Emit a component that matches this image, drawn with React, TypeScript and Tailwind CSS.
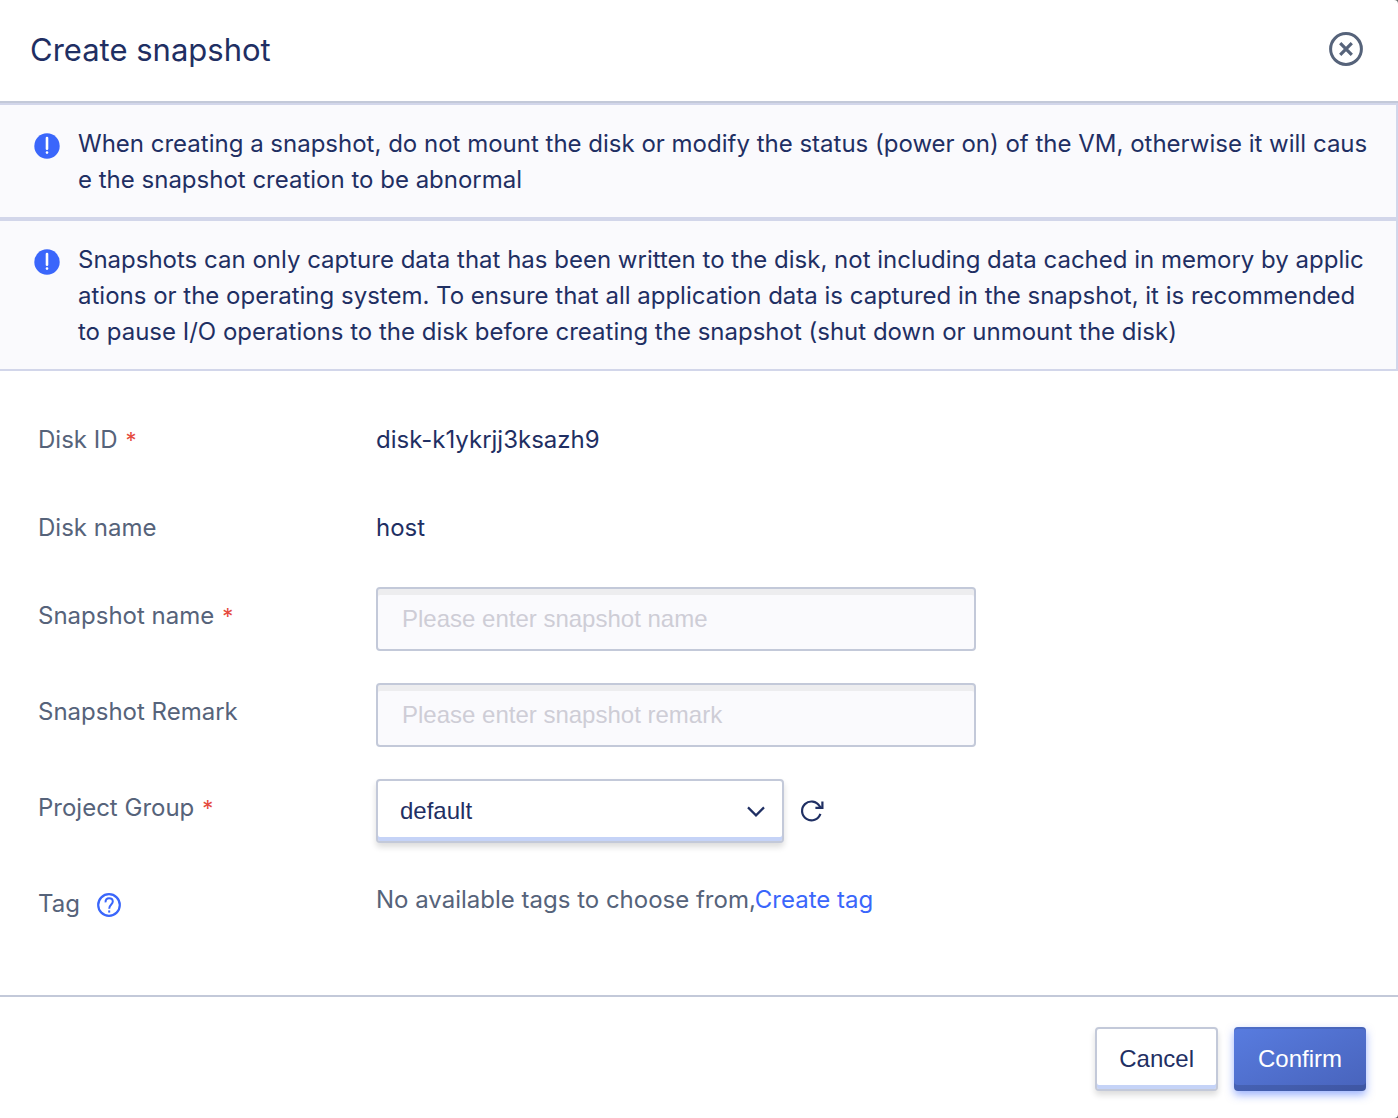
import type { ReactNode } from "react";

function AlertIcon() {
  return (
    <svg viewBox="0 0 26 26" className="mt-[7px] size-[26px] shrink-0" aria-hidden="true">
      <circle cx="13" cy="13" r="12.7" fill="#3a66fb" />
      <path d="M13 5V15.8" stroke="#fff" strokeWidth="2.6" strokeLinecap="round" />
      <circle cx="13" cy="19.6" r="1.3" fill="#fff" />
    </svg>
  );
}

function Notice({ children }: { children: ReactNode }) {
  return (
    <div className="flex gap-[18px] border-2 border-l-0 border-[#d2d6ea] bg-[#fafafd] pt-[21px] pr-7 pb-[19px] pl-[34px]">
      <AlertIcon />
      <p className="min-w-0 flex-1 break-all">{children}</p>
    </div>
  );
}

type RowProps = {
  label: string;
  htmlFor?: string;
  required?: boolean;
  hint?: ReactNode;
  children: ReactNode;
};

function Row({ label, htmlFor, required, hint, children }: RowProps) {
  return (
    <div className="flex min-h-14 items-start">
      <div className="flex w-[338px] shrink-0 items-center gap-2 pt-[11px] text-[#56637a]">
        <label htmlFor={htmlFor}>{label}</label>
        {required && <span className="text-[22px] leading-9 text-[#e54a3c]">*</span>}
        {hint}
      </div>
      {children}
    </div>
  );
}

const inputClass =
  "h-16 w-[600px] min-w-0 rounded-[4px] border-2 border-[#c3c9d9] bg-[#fafafd] px-6 font-['Liberation_Sans',Arial,sans-serif] text-2xl text-[#1f2f63] shadow-[inset_0_6px_0_#ededef] outline-none placeholder:text-[#cecdd6]";

export default function App() {
  return (
    <div className="bg-[#6e6e6e]">
      <main className="flex min-h-screen flex-col rounded-r-[4px] bg-white font-[Inter,sans-serif] text-2xl leading-9 text-[#1f2f63]">
        <header className="flex items-start justify-between border-b-2 border-[#c3c9d9] pt-[31px] pr-[34px] pb-8 pl-[30px]">
          <h1 className="text-[31px] leading-[38px]">Create snapshot</h1>
          <button type="button" aria-label="Close" className="size-9">
            <svg viewBox="0 0 36 36" className="size-9" fill="none" stroke="#56637a">
              <circle cx="18" cy="18" r="15.4" strokeWidth="3" />
              <path d="M12.2 12.2 23.8 23.8M23.8 12.2 12.2 23.8" strokeWidth="3.2" />
            </svg>
          </button>
        </header>

        <Notice>
          When creating a snapshot, do not mount the disk or modify the status (power on) of the VM, otherwise it will
          cause the snapshot creation to be abnormal
        </Notice>
        <Notice>
          Snapshots can only capture data that has been written to the disk, not including data cached in memory by
          applications or the operating system. To ensure that all application data is captured in the snapshot, it is
          recommended to pause I/O operations to the disk before creating the snapshot (shut down or unmount the disk)
        </Notice>

        <form className="flex grow flex-col gap-8 px-[38px] pt-10 pb-16">
          <Row label="Disk ID" required>
            <span className="pt-[11px]">disk-k1ykrjj3ksazh9</span>
          </Row>
          <Row label="Disk name">
            <span className="pt-[11px]">host</span>
          </Row>
          <Row label="Snapshot name" htmlFor="name" required>
            <input id="name" type="text" placeholder="Please enter snapshot name" className={inputClass} />
          </Row>
          <Row label="Snapshot Remark" htmlFor="remark">
            <input id="remark" type="text" placeholder="Please enter snapshot remark" className={inputClass} />
          </Row>
          <Row label="Project Group" htmlFor="group" required>
            <div className="flex items-center gap-4">
              <div className="relative">
                <select
                  id="group"
                  className="h-16 w-[408px] appearance-none rounded-[4px] border-2 border-[#c3c9d9] bg-white px-[22px] font-['Liberation_Sans',Arial,sans-serif] text-2xl text-[#1f2f63] shadow-[inset_0_-4px_0_#c5d3f7,0_4px_6px_rgba(0,0,0,0.14)] outline-none"
                >
                  <option>default</option>
                </select>
                <svg
                  viewBox="0 0 18 12"
                  className="pointer-events-none absolute top-[27px] right-[19px] h-3 w-[18px]"
                  fill="none"
                  stroke="#1f2f63"
                  strokeWidth="2.2"
                  aria-hidden="true"
                >
                  <path d="M1 1.4 9 9.4 17 1.4" />
                </svg>
              </div>
              <button type="button" aria-label="Refresh">
                <svg viewBox="0 0 24 24" className="size-6" fill="none" stroke="#1f2f63" strokeWidth="2.2">
                  <path d="M20.4 14.8A9.4 9.4 0 1 1 19.6 7.2L21.4 9.2" />
                  <path d="M22.4 2.4V8.8H15.4" />
                </svg>
              </button>
            </div>
          </Row>
          <Row
            label="Tag"
            hint={
              <button type="button" aria-label="About tags" className="ml-2">
                <svg viewBox="0 0 26 26" className="size-[26px]" fill="none" stroke="#3a66fb" strokeWidth="2">
                  <circle cx="13" cy="14" r="10.8" strokeWidth="2.2" />
                  <path d="M9.6 11.4C9.2 8.6 11 7.2 13.1 7.2S16.8 8.6 16.8 10.6C16.8 13.6 13.2 13.6 13.2 17.8" />
                  <path d="M13.2 19.4V21.6" />
                </svg>
              </button>
            }
          >
            <span className="pt-[7px] text-[#56637a]">
              No available tags to choose from,
              <a href="#create-tag" className="text-[#3a66fb]">
                Create tag
              </a>
            </span>
          </Row>
        </form>

        <footer className="flex justify-end gap-4 border-t-2 border-[#c3c9d9] px-8 pt-[30px] pb-[27px] font-['Liberation_Sans',Arial,sans-serif]">
          <button
            type="button"
            className="h-16 rounded-[4px] border-2 border-[#c3c9d9] bg-white px-[22px] shadow-[inset_0_-4px_0_#c5d3f7,0_4px_6px_rgba(0,0,0,0.14)]"
          >
            Cancel
          </button>
          <button
            type="button"
            className="h-16 rounded-[4px] bg-linear-to-br from-[#587ce0] to-[#4863bb] px-6 text-white shadow-[inset_0_2px_0_rgba(0,0,0,0.1),inset_0_-6px_0_rgba(0,0,0,0.13),0_4px_8px_rgba(58,102,251,0.5)]"
          >
            Confirm
          </button>
        </footer>
      </main>
    </div>
  );
}
